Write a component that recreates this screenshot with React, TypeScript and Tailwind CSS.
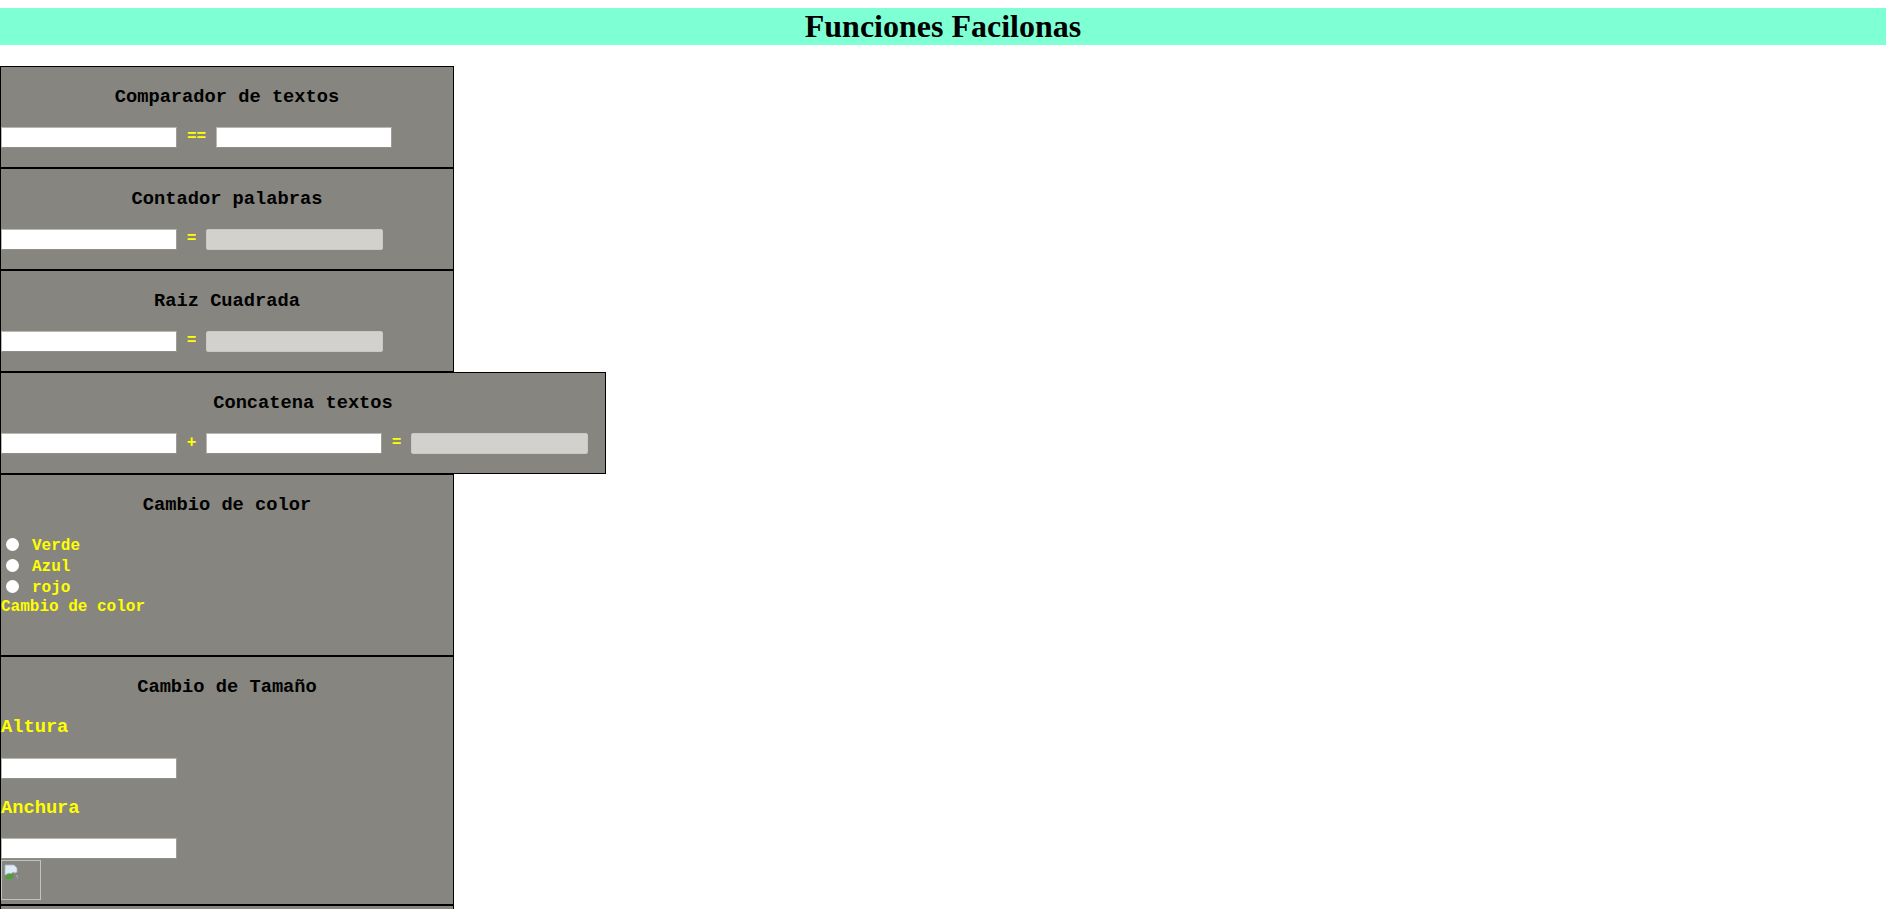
import React from "react";

const mono = "font-['Liberation_Mono','Courier_New',monospace]";

function TextBox({ readOnly }: { readOnly?: boolean }) {
  if (readOnly) {
    return (
      <input
        readOnly
        className="h-[21px] w-[177px] shrink-0 rounded-[2px] border border-[#c9c8c4] bg-[#d2d1cd] outline-none"
      />
    );
  }
  return (
    <input className="h-[21px] w-[176px] shrink-0 border border-t-[#b9b8b3] border-l-[#b9b8b3] border-r-[#9d9c97] border-b-[#8f8e89] bg-white outline-none" />
  );
}

function Sep({ text, w }: { text: string; w: string }) {
  return (
    <span className={`${w} shrink-0 text-center text-[16px] font-bold leading-[21px] text-[#ffff00]`}>{text}</span>
  );
}

function Title({ children }: { children: React.ReactNode }) {
  return <h3 className="text-center text-[18.72px] font-bold leading-[21px] text-black">{children}</h3>;
}

function Panel({ className, children }: { className: string; children?: React.ReactNode }) {
  return <section className={`border border-black bg-[#86857f] pt-[20px] ${mono} ${className}`}>{children}</section>;
}

function BrokenImage() {
  return (
    <div className="mt-[1px] h-[40px] w-[40px] border border-[#c3c2bd] pl-[2px] pt-[3px]">
      <svg width="16" height="16" viewBox="0 0 16 16">
        <path d="M1 1h9l3 3v4l-2 1-2-1-2 2-2-1-4 2z" fill="#dfeaf7" stroke="#a9b8c9" strokeWidth="0.8" />
        <path d="M1 13c2-3 5-4 8-3l1 2-2 3H1z" fill="#4f9f3a" />
        <path d="M12 12h2M13 14h1" stroke="#a9b8c9" strokeWidth="1" />
      </svg>
    </div>
  );
}

function RadioRow({ label }: { label: string }) {
  return (
    <div className="flex h-[21px] items-center">
      <span className="ml-[5px] mr-[3px] -mt-[2px] h-[13px] w-[13px] rounded-full bg-white" />
      <span className="pl-[10px] text-[16px] font-bold text-[#ffff00]">{label}</span>
    </div>
  );
}

export default function App() {
  return (
    <div className="min-h-screen bg-white pt-[8px]">
      <header className="h-[37px] w-[1886px] bg-[#7fffd4]">
        <h1 className="text-center font-['Liberation_Serif','Times_New_Roman',serif] text-[32px] font-bold leading-[37px] text-black">
          Funciones Facilonas
        </h1>
      </header>

      <main className="mt-[21px] flex flex-col">
        <Panel className="h-[102px] w-[454px]">
          <Title>Comparador de textos</Title>
          <div className="mt-[19px] flex items-center">
            <TextBox />
            <Sep text="==" w="w-[39px]" />
            <TextBox />
          </div>
        </Panel>

        <Panel className="h-[102px] w-[454px]">
          <Title>Contador palabras</Title>
          <div className="mt-[19px] flex items-center">
            <TextBox />
            <Sep text="=" w="w-[29px]" />
            <TextBox readOnly />
          </div>
        </Panel>

        <Panel className="h-[102px] w-[454px]">
          <Title>Raiz Cuadrada</Title>
          <div className="mt-[19px] flex items-center">
            <TextBox />
            <Sep text="=" w="w-[29px]" />
            <TextBox readOnly />
          </div>
        </Panel>

        <Panel className="h-[102px] w-[606px]">
          <Title>Concatena textos</Title>
          <div className="mt-[19px] flex items-center">
            <TextBox />
            <Sep text="+" w="w-[29px]" />
            <TextBox />
            <Sep text="=" w="w-[29px]" />
            <TextBox readOnly />
          </div>
        </Panel>

        <Panel className="h-[182px] w-[454px]">
          <Title>Cambio de color</Title>
          <div className="mt-[19px]">
            <RadioRow label="Verde" />
            <RadioRow label="Azul" />
            <RadioRow label="rojo" />
            <div className="text-[16px] font-bold leading-[19px] text-[#ffff00]">Cambio de color</div>
          </div>
        </Panel>

        <Panel className="h-[249px] w-[454px]">
          <Title>Cambio de Tamaño</Title>
          <div className="mt-[19px] text-[18.72px] font-bold leading-[21px] text-[#ffff00]">Altura</div>
          <div className="mt-[20px] flex">
            <TextBox />
          </div>
          <div className="mt-[19px] text-[18.72px] font-bold leading-[21px] text-[#ffff00]">Anchura</div>
          <div className="mt-[19px] flex">
            <TextBox />
          </div>
          <BrokenImage />
        </Panel>

        <Panel className="h-[102px] w-[454px]" />
      </main>
    </div>
  );
}
